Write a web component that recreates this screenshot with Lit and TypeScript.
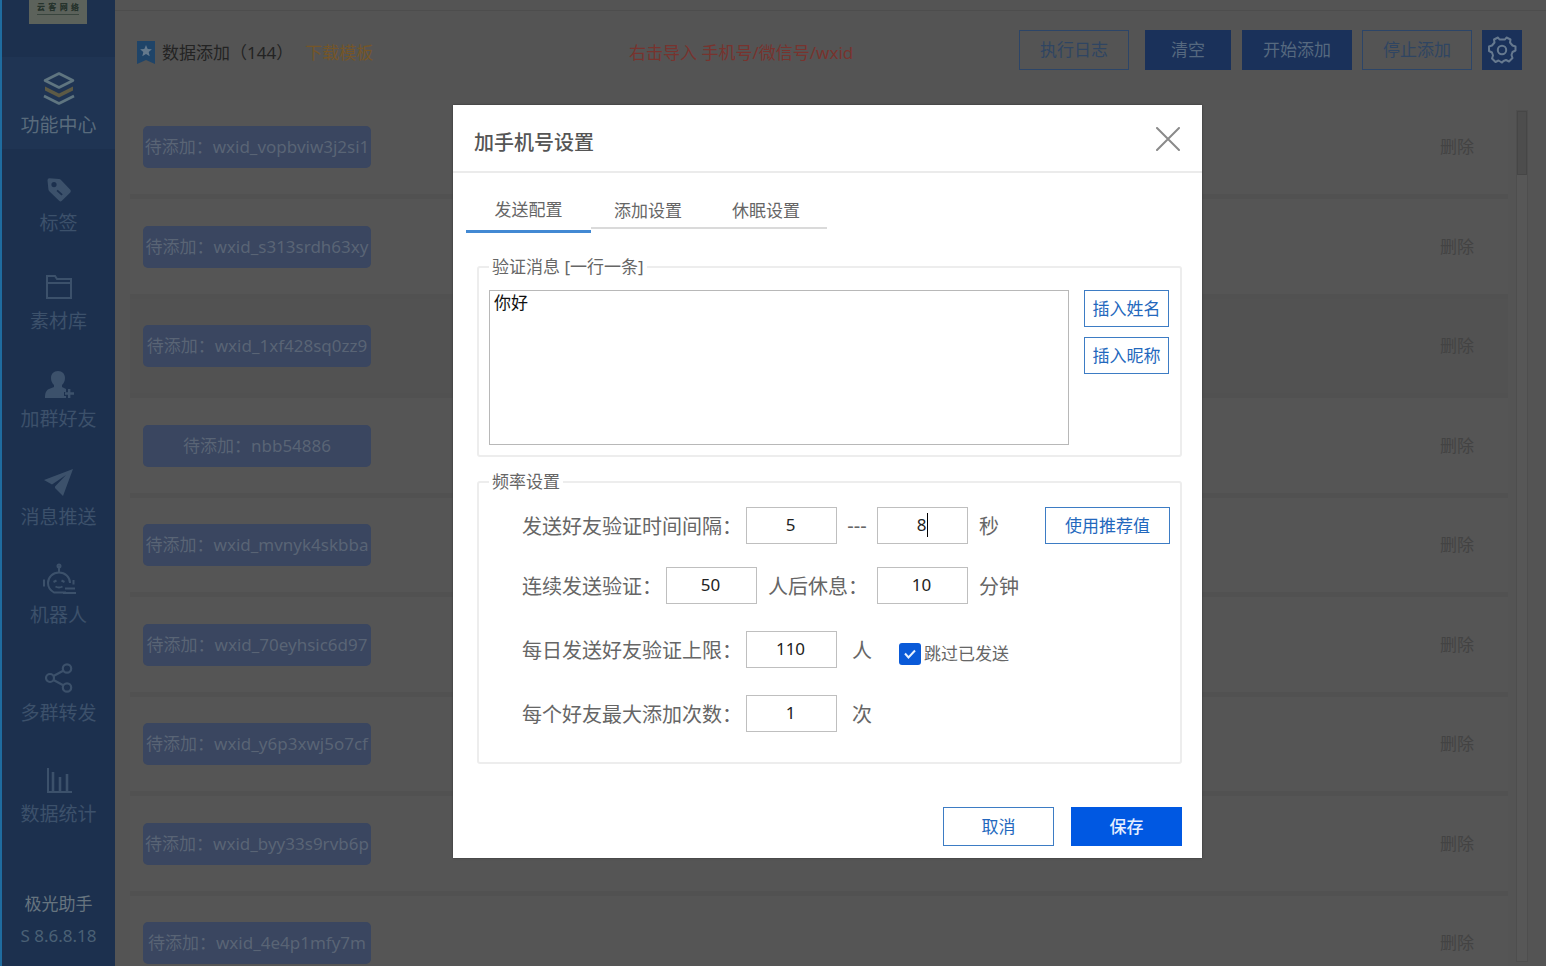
import { LitElement, html, css, svg, nothing } from "lit";
import { customElement, property, state } from "lit/decorators.js";
import { classMap } from "lit/directives/class-map.js";

const ICONS: Record<string, unknown> = {
  layers: svg`<svg width="34" height="34" viewBox="0 0 34 34" fill="none" stroke-width="2.6" stroke-linejoin="round">
    <path d="M3 19.5l14 7 14-7v-4l-14 7-14-7z" fill="#5d5a45" stroke="none"/>
    <path d="M17 2.500L31 9.500 17 16.500 3 9.500z" stroke="#5f7580"/>
    <path d="M2 25l15 7.500L32 25" stroke="#5f7580"/></svg>`,
  tag: svg`<svg width="28" height="26" viewBox="0 0 28 26" fill="currentColor">
    <path fill-rule="evenodd" d="M2.500 3.500a2 2 0 0 1 2-2.200l9.500.6a3 3 0 0 1 2 1l9.300 9.800a2 2 0 0 1 0 2.700l-8.400 8.400a2 2 0 0 1-2.800 0L4.300 14.300a3 3 0 0 1-.9-2zM9 5a2.600 2.600 0 1 0 0 5.200A2.600 2.600 0 0 0 9 5zM11.500 14l5 4.500 1.200-1.300-5-4.500z"/></svg>`,
  folder: svg`<svg width="28" height="28" viewBox="0 0 28 28" fill="none" stroke="currentColor" stroke-width="2">
    <path d="M2 25V3h8l2 3h14v19zM2 10h24"/></svg>`,
  user: svg`<svg width="30" height="29" viewBox="0 0 30 29" fill="currentColor">
    <path d="M14 1c4.400 0 7 3 7 7 0 3-1.300 5.500-3 7v2l4 2v3h-2v4h2v2H1c0-5 1-7.500 4-9l5-2v-2C8.300 13.500 7 11 7 8c0-4 2.600-7 7-7z"/>
    <path d="M24 19h2.400v3.300H30v2.400h-3.600V28H24v-3.300h-3v-2.400h3z"/></svg>`,
  plane: svg`<svg width="30" height="29" viewBox="0 0 30 29" fill="currentColor">
    <path d="M29 1L0 12l8 4.500L22 7 11 18.500V20l8 8z"/></svg>`,
  robot: svg`<svg width="36" height="32" viewBox="0 0 36 32" fill="none" stroke="currentColor" stroke-width="2">
    <path d="M18 3v6"/><circle cx="18" cy="3" r="1.500"/>
    <path d="M25 29.500H13C9.500 27.500 7 24 7 20c0-6 5-10.500 11-10.500S29 14 29 20"/>
    <path d="M3 16.500v7M32.500 17v4.500M24 25.500h10M22 30h13"/>
    <path d="M12.500 19l3-1.500M20.500 17.500l3 1.500M14.500 23.500q3.500 2 7 0"/></svg>`,
  share: svg`<svg width="28" height="30" viewBox="0 0 28 30" fill="none" stroke="currentColor" stroke-width="2.200">
    <circle cx="5" cy="15" r="4"/><circle cx="22" cy="5.500" r="4.200"/><circle cx="22" cy="24.500" r="4.200"/>
    <path d="M8.500 13l9.700-5.300M8.500 17l9.700 5.300"/></svg>`,
  chart: svg`<svg width="26" height="26" viewBox="0 0 26 26" fill="none" stroke="currentColor" stroke-width="2.600">
    <path d="M2 0v24h24" stroke-width="2"/><path d="M7 4v19M14 9v14M21 6v17"/></svg>`,
  gear: svg`<svg width="30" height="30" viewBox="0 0 30 30" fill="none" stroke="#66798f" stroke-width="2" stroke-linejoin="round">
    <path d="M12.500 4.500L11 2.500 7 4.500l.5 3-2.500 3-3 1v4.500l3 1.500 1 3-1 3 3.500 3.500 3-1.500 2.500 1.500L15 27.500l1.500-1.500 2.500-1 3 1.500 3.500-3.500-1-3 1-3 3-1.500V11.500l-3-1-2.500-3 .5-3-4-2-1.500 2z"/>
    <circle cx="15" cy="15" r="4.200"/></svg>`,
  bookmark: svg`<svg width="18" height="23" viewBox="0 0 18 23">
    <path d="M0 0h18v23l-9-4-9 4z" fill="#1f4468"/>
    <path d="M9 4l1.700 3.900 4.200.4-3.200 2.800 1 4.100L9 13l-3.700 2.200 1-4.100L3.100 8.300l4.200-.4z" fill="#64798c"/></svg>`,
  close: svg`<svg width="24" height="24" viewBox="0 0 24 24" stroke="#8a8a8a" stroke-width="2" stroke-linecap="round">
    <path d="M1 1l22 22M23 1L1 23"/></svg>`,
};

const FONT = css`
  :host {
    font-family: "Noto Sans", "Noto Sans CJK SC", sans-serif;
    font-size: 17px;
    line-height: 24px;
  }
  * { box-sizing: border-box; }
  button, input, textarea { font: inherit; margin: 0; border-radius: 0; }
  button { cursor: pointer; padding: 0; white-space: nowrap; }
  svg { display: block; flex: none; }
`;

@customElement("side-nav")
class SideNav extends LitElement {
  static styles = [FONT, css`
    :host {
      display: flex;
      flex-direction: column;
      width: 115px;
      background: #1c304e;
      border-left: 2px solid #1f6c9f;
      color: #3c516b;
      text-align: center;
    }
    .logo {
      width: 58px;
      height: 24px;
      margin: 0 auto 33px 27px;
      background: #5c625b;
      color: #26332c;
      font-size: 8px;
      font-weight: 700;
      line-height: 14px;
    }
    .logo span {
      display: flex;
      justify-content: space-between;
      margin: 0 8px;
      border-bottom: 1px solid #39453e;
    }
    nav { display: flex; flex-direction: column; }
    a {
      display: flex;
      flex-direction: column;
      height: 98px;
      font-size: 19px;
      color: inherit;
      text-decoration: none;
    }
    a.active { color: #596b7c; background: linear-gradient(#1f3453 92px, transparent 92px); }
    a:last-child { margin-top: 3px; }
    .icon { display: flex; height: 48px; align-items: flex-end; justify-content: center; }
    .label { line-height: 40px; }
    footer { margin-top: auto; padding-bottom: 14px; line-height: 32px; color: #4a6075; }
    .name { color: #66747f; }
  `];
  items = [
    ["layers", "功能中心"], ["tag", "标签"], ["folder", "素材库"], ["user", "加群好友"],
    ["plane", "消息推送"], ["robot", "机器人"], ["share", "多群转发"], ["chart", "数据统计"],
  ];
  render() {
    return html`
      <div class="logo"><span><b>云</b><b>客</b><b>网</b><b>络</b></span></div>
      <nav>
        ${this.items.map(([icon, label], i) => html`
          <a href="#" class=${classMap({ active: i === 0 })}>
            <span class="icon">${ICONS[icon]}</span><span class="label">${label}</span>
          </a>`)}
      </nav>
      <footer><div class="name">极光助手</div><div>S 8.6.8.18</div></footer>`;
  }
}

@customElement("contact-list")
class ContactList extends LitElement {
  @property({ type: Array }) items: string[] = [];
  static styles = [FONT, css`
    :host { display: flex; flex: 1; min-height: 0; padding: 0 16px 0 15px; overflow: hidden; }
    ul { flex: 1; margin: 0; padding: 0; list-style: none; }
    li {
      display: flex;
      align-items: center;
      justify-content: space-between;
      height: 99px;
      padding: 0 34px 0 13px;
      border-bottom: 5px solid #515151;
      background: #555;
    }
    li:nth-child(even) { height: 100px; }
    li.hover { background: #525252; }
    .tag {
      display: flex;
      justify-content: center;
      align-items: center;
      width: 228px;
      height: 42px;
      border-radius: 5px;
      background: #3a4660;
      color: #596475;
      white-space: nowrap;
      overflow: hidden;
    }
    .tag span { flex: none; }
    li button { border: 0; background: none; color: #434343; }
    .track { width: 12px; margin: 10px 2px 4px 8px; border: 1px solid #4e4e4e; background: #575757; }
    .thumb { height: 64px; background: #4d4d4d; border: 1px solid #464646; }
  `];
  render() {
    return html`
      <ul>
        ${this.items.map((id, i) => html`
          <li class=${classMap({ hover: i === 2 })}>
            <div class="tag"><span>待添加：${id}</span></div>
            <button>删除</button>
          </li>`)}
      </ul>
      <div class="track"><div class="thumb"></div></div>`;
  }
}

@customElement("settings-dialog")
class SettingsDialog extends LitElement {
  @state() tab = 0;
  static styles = [FONT, css`
    :host { display: block; width: 749px; background: #fff; color: #666; box-shadow: 0 0 2px #333; }
    header {
      display: flex;
      align-items: center;
      justify-content: space-between;
      height: 68px;
      padding: 10px 22px 0 21px;
      border-bottom: 2px solid #ebebeb;
    }
    h1 { margin: 0; font-size: 20px; line-height: 28px; font-weight: 500; color: #555; }
    .close { border: 0; background: none; padding-bottom: 8px; }
    .tabs { display: flex; align-items: flex-start; margin: 17px 13px 0; }
    .tab {
      width: 118px;
      height: 39px;
      padding: 4px 4px 0 0;
      border: 0;
      border-bottom: 2px solid #dadada;
      background: none;
      color: inherit;
    }
    .tab.active { width: 125px; height: 43px; padding: 4px 0; border-bottom: 3px solid #4289d3; }
    fieldset {
      min-width: 0;
      margin: 23px 20px 0 24px;
      padding: 12px 11px 10px 10px;
      border: 2px solid #ededed;
      border-radius: 3px;
    }
    fieldset + fieldset { margin-top: 14px; padding: 14px 10px 30px 43px; }
    legend { padding: 0 3px; line-height: 22px; }
    fieldset + fieldset legend { margin-left: -33px; }
    .message { display: flex; gap: 15px; }
    textarea {
      flex: 1;
      height: 155px;
      padding: 0 4px;
      border: 1px solid #b8b8b8;
      outline: 0;
      resize: none;
      color: #111;
      background: #fff;
    }
    .inserts { display: flex; flex-direction: column; gap: 10px; }
    .outline {
      width: 85px;
      height: 37px;
      border: 1px solid #3d7cc4;
      background: #fff;
      color: #2368bd;
    }
    .outline.wide { width: 125px; margin-left: auto; }
    .row { display: flex; align-items: center; margin-bottom: 23px; font-size: 20px; line-height: 34px; }
    .row:nth-of-type(n + 3) { margin-top: 27px; }
    .row:last-child { margin-bottom: 0; }
    .row label { padding: 3px 4px 0 0; }
    .row button, .check { font-size: 17px; }
    .num {
      width: 91px;
      height: 37px;
      padding: 0 2px 3px 0;
      border: 1px solid #bfbfbf;
      outline: 0;
      text-align: center;
      font-size: 17px;
      color: #222;
      background: #fff;
    }
    .field { display: flex; position: relative; }
    .caret { position: absolute; left: 50px; top: 6px; width: 1px; height: 24px; background: #000; }
    .dash { width: 40px; text-align: center; }
    .row .unit { padding: 3px 8px 0 11px; }
    .row label.unit { padding-right: 9px; }
    .row .count { padding-left: 15px; }
    .row .check {
      display: flex;
      align-items: center;
      align-self: flex-end;
      gap: 3px;
      margin-left: 19px;
      padding: 0;
      line-height: 28px;
    }
    .check input {
      appearance: none;
      width: 22px;
      height: 22px;
      border-radius: 3px;
      background: #0a5ad8;
    }
    .box { display: grid; }
    .box > * { grid-area: 1 / 1; }
    .box svg { pointer-events: none; }
    footer { display: flex; justify-content: flex-end; gap: 17px; padding: 43px 20px 12px; }
    footer button { width: 111px; height: 39px; }
    .primary { border: 0; background: #0058e2; color: #e4eeff; font-weight: 500; }
    .cancel { width: 111px; height: 39px; }
  `];
  num(id: string, value: string, caret = false) {
    return html`<span class="field">
      <input class="num" id=${id} .value=${value}>${caret ? html`<span class="caret"></span>` : nothing}
    </span>`;
  }
  render() {
    return html`
      <header>
        <h1>加手机号设置</h1>
        <button class="close" aria-label="关闭">${ICONS.close}</button>
      </header>
      <div class="tabs" role="tablist">
        ${["发送配置", "添加设置", "休眠设置"].map((t, i) => html`
          <button role="tab" class=${classMap({ tab: true, active: i === this.tab })}
            @click=${() => (this.tab = i)}>${t}</button>`)}
      </div>
      <fieldset>
        <legend>验证消息 [一行一条]</legend>
        <div class="message">
          <textarea aria-label="验证消息" .value=${"你好"}></textarea>
          <div class="inserts">
            <button class="outline">插入姓名</button>
            <button class="outline">插入昵称</button>
          </div>
        </div>
      </fieldset>
      <fieldset>
        <legend>频率设置</legend>
        <div class="row">
          <label for="min">发送好友验证时间间隔：</label>${this.num("min", "5")}
          <span class="dash">---</span>${this.num("max", "8", true)}
          <label class="unit" for="max">秒</label>
          <button class="outline wide">使用推荐值</button>
        </div>
        <div class="row">
          <label for="batch">连续发送验证：</label>${this.num("batch", "50")}
          <label class="unit" for="rest">人后休息：</label>${this.num("rest", "10")}
          <span class="unit">分钟</span>
        </div>
        <div class="row">
          <label for="daily">每日发送好友验证上限：</label>${this.num("daily", "110")}
          <span class="unit count">人</span>
          <label class="check">
            <span class="box"><input type="checkbox" checked>
              <svg width="22" height="22" viewBox="0 0 22 22" fill="none" stroke="#e8f1ff" stroke-width="2"><path d="M6 10.500l3.500 4 6.500-7"/></svg>
            </span>跳过已发送
          </label>
        </div>
        <div class="row">
          <label for="times">每个好友最大添加次数：</label>${this.num("times", "1")}
          <span class="unit count">次</span>
        </div>
      </fieldset>
      <footer>
        <button class="outline cancel">取消</button>
        <button class="primary">保存</button>
      </footer>`;
  }
}

@customElement("app-root")
class AppRoot extends LitElement {
  static styles = [FONT, css`
    :host { display: flex; height: 100vh; overflow: hidden; background: #545454; }
    main { position: relative; display: flex; flex: 1; flex-direction: column; min-width: 0; }
    .strip { height: 11px; border-bottom: 1px solid #4d4d4d; }
    .bar { display: flex; align-items: center; height: 77px; margin-bottom: 12px; padding: 0 24px 0 22px; }
    .left { display: flex; align-items: center; flex: 0 1 492px; margin-top: 6px; }
    .heading { margin: 0 12px 0 7px; font-size: 17px; font-weight: 400; color: #232323; }
    .left a { color: #755628; text-decoration: none; }
    .hint { margin-top: 7px; color: #78332e; }
    .actions { display: flex; flex: 1; justify-content: flex-end; gap: 10px; }
    .actions button { width: 110px; height: 40px; border: 1px solid #2c4568; background: none; color: #2f4562; }
    .actions .solid { border: 0; background: #1a315a; color: #56697f; }
    .actions .short { width: 86px; margin: 0 1px 0 6px; }
    .actions .gear { display: grid; place-items: center; width: 40px; }
    .overlay {
      position: absolute;
      inset: 0;
      display: flex;
      align-items: center;
      justify-content: center;
      padding: 0 6px 3px 0;
    }
  `];
  contacts = [
    "wxid_vopbviw3j2si1", "wxid_s313srdh63xy", "wxid_1xf428sq0zz9", "nbb54886", "wxid_mvnyk4skbba",
    "wxid_70eyhsic6d97", "wxid_y6p3xwj5o7cf", "wxid_byy33s9rvb6p", "wxid_4e4p1mfy7m",
  ];
  render() {
    return html`
      <side-nav></side-nav>
      <main>
        <div class="strip"></div>
        <div class="bar">
          <div class="left">
            ${ICONS.bookmark}
            <h2 class="heading">数据添加（144）</h2>
            <a href="#">下载模板</a>
          </div>
          <div class="hint">右击导入 手机号/微信号/wxid</div>
          <div class="actions">
            <button>执行日志</button>
            <button class="solid short">清空</button>
            <button class="solid">开始添加</button>
            <button>停止添加</button>
            <button class="solid gear" aria-label="设置">${ICONS.gear}</button>
          </div>
        </div>
        <contact-list .items=${this.contacts}></contact-list>
        <div class="overlay"><settings-dialog role="dialog" aria-label="加手机号设置"></settings-dialog></div>
      </main>`;
  }
}
